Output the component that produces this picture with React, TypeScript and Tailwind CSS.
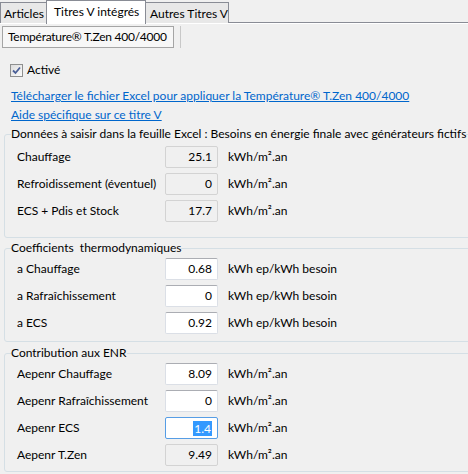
import React from "react";

const font = { fontFamily: "Lato, 'Liberation Sans', sans-serif" };

function Input({ value, mode }: { value: string; mode: "disabled" | "enabled" | "focused" }) {
  const cls =
    mode === "disabled"
      ? "bg-[#f0f0f0] border border-[#d3d3d3]"
      : mode === "focused"
      ? "bg-white border border-[#569de5]"
      : "bg-white border border-[#dbdfe6] border-t-[#abadb3]";
  return (
    <div className={`w-[53px] h-[22px] shrink-0 rounded-[2px] flex items-center justify-end pr-[5px] ${cls}`}>
      {mode === "focused" ? (
        <span className="bg-[#3399ff] text-white leading-[15px] px-[1px]">{value}</span>
      ) : (
        <span>{value}</span>
      )}
    </div>
  );
}

function Row({ label, value, unit, mode }: { label: string; value: string; unit: string; mode: "disabled" | "enabled" | "focused" }) {
  return (
    <div className="flex items-center h-[22px] whitespace-nowrap">
      <div className="w-[160px] shrink-0 pl-[12px]">{label}</div>
      <Input value={value} mode={mode} />
      <div className="ml-[10px]">{unit}</div>
    </div>
  );
}

function Group({ title, children, className }: { title: string; children: React.ReactNode; className: string }) {
  return (
    <fieldset className={`ml-[4px] w-[480px] border border-[#d5dfe5] rounded-[3px] ${className}`}>
      <legend className="ml-[6px] px-0 leading-[14px] whitespace-pre">{title}</legend>
      {children}
    </fieldset>
  );
}

export default function App() {
  const unit = "kWh/m².an";
  return (
    <div className="w-[468px] h-[474px] bg-[#f0f0f0] overflow-hidden text-[12px] text-black relative" style={font}>
      {/* tab strip */}
      <div className="h-[24px] flex items-start relative whitespace-nowrap">
        <div className="absolute left-0 right-0 top-[22px] h-[1px] bg-[#898c95]" />
        <div className="absolute left-0 right-0 top-[23px] h-[1px] bg-white" />
        <div className="mt-[2px] h-[21px] w-[47px] border border-[#898c95] border-b-0 bg-[#e8e8e8] pl-[3px] pt-[2px] relative z-10">Articles</div>
        <div className="h-[24px] w-[100px] border border-[#898c95] border-b-0 bg-white pl-[7px] pt-[2px] relative z-10 -ml-[1px]">Titres V intégrés</div>
        <div className="mt-[2px] h-[21px] w-[84px] border border-[#898c95] border-b-0 bg-[#e8e8e8] pl-[4px] pt-[2px] relative z-10 -ml-[1px]">Autres Titres V</div>
      </div>
      {/* sub tab */}
      <div className="flex items-start pt-[2px] h-[24px]">
        <div className="ml-[2px] w-[172px] h-[22px] border border-[#a5a5a5] bg-[#f7f7f7] pl-[5px] flex items-center whitespace-nowrap tracking-[-0.25px]">Température® T.Zen 400/4000</div>
        <div className="ml-[6px] w-[1px] h-[22px] bg-[#c8c8c8]" />
      </div>
      {/* checkbox */}
      <div className="flex items-center mt-[15px] ml-[10px] h-[14px]">
        <div className="w-[13px] h-[13px] border border-[#8e8f8f] bg-gradient-to-br from-[#dcdcdc] to-[#fbfbfb] flex items-center justify-center">
          <svg width="9" height="9" viewBox="0 0 9 9">
            <path d="M1 4.5 L3.5 7 L8 1.5" stroke="#4a5f97" strokeWidth="1.8" fill="none" />
          </svg>
        </div>
        <span className="ml-[4px]">Activé</span>
      </div>
      {/* links */}
      <div className="ml-[11px] mt-[12px] leading-[14px] text-[#0066cc] underline whitespace-nowrap">Télécharger le fichier Excel pour appliquer la Température® T.Zen 400/4000</div>
      <div className="ml-[11px] mt-[5px] leading-[14px] text-[#0066cc] underline">Aide spécifique sur ce titre V</div>

      <Group title="Données à saisir dans la feuille Excel : Besoins en énergie finale avec générateurs fictifs" className="mt-[5px] pt-[5px] pb-[15px]">
        <div className="flex flex-col gap-[5px]">
          <Row label="Chauffage" value="25.1" unit={unit} mode="disabled" />
          <Row label="Refroidissement (éventuel)" value="0" unit={unit} mode="disabled" />
          <Row label="ECS + Pdis et Stock" value="17.7" unit={unit} mode="disabled" />
        </div>
      </Group>

      <Group title="Coefficients  thermodynamiques" className="mt-[3px] pt-[3px] pb-[7px]">
        <div className="flex flex-col gap-[5px]">
          <Row label="a Chauffage" value="0.68" unit="kWh ep/kWh besoin" mode="enabled" />
          <Row label="a Rafraîchissement" value="0" unit="kWh ep/kWh besoin" mode="enabled" />
          <Row label="a ECS" value="0.92" unit="kWh ep/kWh besoin" mode="enabled" />
        </div>
      </Group>

      <Group title="Contribution aux ENR" className="mt-[4px] pt-[3px] pb-[5px]">
        <div className="flex flex-col gap-[5px]">
          <Row label="Aepenr Chauffage" value="8.09" unit={unit} mode="enabled" />
          <Row label="Aepenr Rafraîchissement" value="0" unit={unit} mode="enabled" />
          <Row label="Aepenr ECS" value="1.4" unit={unit} mode="focused" />
          <Row label="Aepenr T.Zen" value="9.49" unit={unit} mode="disabled" />
        </div>
      </Group>
    </div>
  );
}
